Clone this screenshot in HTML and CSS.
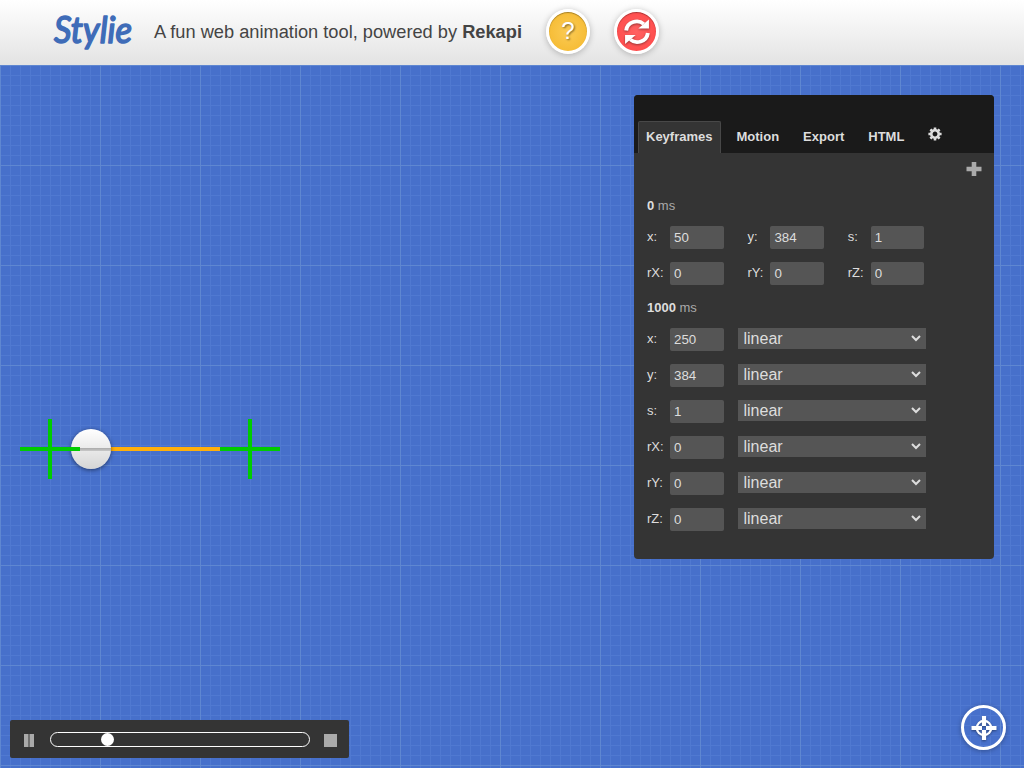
FILE: index.html
```html
<!DOCTYPE html>
<html lang="en">
<head>
<meta charset="utf-8">
<title>Stylie</title>
<link rel="stylesheet" href="styles.css">
</head>
<body>
<header class="header">
  <svg class="logo" width="84" height="56" viewBox="0 -6 84 56"><text class="logo-text" x="2" y="33" textLength="78" lengthAdjust="spacingAndGlyphs">Stylie</text></svg>
  <h1 class="tagline">A fun web animation tool, powered by <b>Rekapi</b></h1>
  <button class="round help">?</button>
  <button class="round reload" aria-label="Reload">
    <svg width="26" height="26" viewBox="0 0 24 26" preserveAspectRatio="none"><path d="M2 11.500C3 2.500 13 0 18.200 5" fill="none" stroke="#fff" stroke-width="3.600"/><path d="M23 .5V9.500H13.200Z" fill="#fff"/><path d="M22 14C21 23 11 25.500 5.800 20.500" fill="none" stroke="#fff" stroke-width="3.600"/><path d="M1 25V16H10.800Z" fill="#fff"/></svg>
  </button>
</header>
<main class="canvas">
  <div class="path"></div>
  <div class="ball"></div>
  <svg class="cross start" width="60" height="60"><path d="M0 30H60M30 0V60"/></svg>
  <svg class="cross end" width="60" height="60"><path d="M0 30H60M30 0V60"/></svg>
</main>
<section class="panel">
  <nav class="tabs">
    <a class="tab active">Keyframes</a><a class="tab">Motion</a><a class="tab">Export</a><a class="tab">HTML</a>
    <a class="tab gear"><svg width="14" height="14" viewBox="-7 -7 14 14"><g stroke="#ddd" stroke-width="2.600"><path d="M0-6.600V-4M0 6.600V4M-6.600 0H-4M6.600 0H4M-4.600-4.600L-3-3M4.600 4.600L3 3M-4.600 4.600L-3 3M4.600-4.600L3-3"/><circle r="3.700" fill="none"/></g></svg></a>
  </nav>
  <div class="body">
    <div class="add"><svg width="16" height="16" viewBox="0 0 16 16"><path d="M0.500 7H15.500M8 0V14" stroke="#aaa" stroke-width="4.600"/></svg></div>
    <h2 class="time"><b>0</b> ms</h2>
    <div class="grid">
      <label class="field"><span>x:</span><input value="50"></label>
      <label class="field"><span>y:</span><input value="384"></label>
      <label class="field"><span>s:</span><input value="1"></label>
      <label class="field"><span>rX:</span><input value="0"></label>
      <label class="field"><span>rY:</span><input value="0"></label>
      <label class="field"><span>rZ:</span><input value="0"></label>
    </div>
    <h2 class="time second"><b>1000</b> ms</h2>
    <div class="rows">
      <div class="row"><label class="field"><span>x:</span><input value="250"></label><select><option>linear</option></select></div>
      <div class="row"><label class="field"><span>y:</span><input value="384"></label><select><option>linear</option></select></div>
      <div class="row"><label class="field"><span>s:</span><input value="1"></label><select><option>linear</option></select></div>
      <div class="row"><label class="field"><span>rX:</span><input value="0"></label><select><option>linear</option></select></div>
      <div class="row"><label class="field"><span>rY:</span><input value="0"></label><select><option>linear</option></select></div>
      <div class="row"><label class="field"><span>rZ:</span><input value="0"></label><select><option>linear</option></select></div>
    </div>
  </div>
</section>
<section class="player">
  <svg class="pause" width="10" height="13"><path d="M0 0H4.500V13H0ZM5.500 0H10V13H5.500Z" fill="#aaa"/></svg>
  <div class="track"><div class="thumb"></div></div>
  <div class="stop"></div>
</section>
<button class="round target" aria-label="Toggle crosshairs">
  <svg width="26" height="26" viewBox="-13 -13 26 26"><circle r="7.200" fill="none" stroke="#fff" stroke-width="2.200"/><path d="M-12.500 0H-2M2 0H12.500M0-12V-2M0 2V12" stroke="#fff" stroke-width="4.200"/></svg>
</button>
</body>
</html>
```
FILE: styles.css
```css
* { box-sizing: border-box; }
body {
  margin: 0;
  width: 1024px;
  height: 768px;
  display: flex;
  flex-direction: column;
  position: relative;
  overflow: hidden;
  font-family: "Liberation Sans", Arial, sans-serif;
  font-size: 13px;
  color: #ddd;
}
.header {
  height: 65px;
  flex: none;
  display: flex;
  align-items: flex-start;
  padding: 9px 0 0 52px;
  background: linear-gradient(#fff, #e3e3e3);
}
.logo { flex: none; margin-top: -5px; overflow: visible; }
.logo-text {
  font: italic 400 37px Lato, sans-serif;
  fill: #3f6cb8;
  stroke: #3f6cb8;
  stroke-width: 1.6;
  stroke-linejoin: round;
}
.tagline {
  margin: 12px 0 0 18px;
  width: 392px;
  font-size: 18.24px;
  line-height: 22px;
  font-weight: 400;
  color: #444;
  white-space: nowrap;
}
.round {
  width: 45px;
  height: 45px;
  flex: none;
  display: flex;
  align-items: center;
  justify-content: center;
  padding: 0;
  border: 3px solid #fff;
  border-radius: 50%;
  box-shadow: 0 1px 6px rgba(0, 0, 0, .25), inset 0 1px 1px rgba(0, 0, 0, .35);
  color: #fff;
}
.round svg { filter: drop-shadow(0 1px 1px rgba(0, 0, 0, .4)); }
.help {
  width: 44px;
  background: radial-gradient(#fbcb55, #f4b72b);
  font: 24px "Liberation Sans", Arial, sans-serif;
  text-shadow: 1px 1px 2px rgba(0, 0, 0, .5);
  padding-bottom: 2px;
}
.reload { margin-left: 24px; background: radial-gradient(#ff6262, #ff4646); }
.target {
  position: absolute;
  left: 961px;
  top: 705px;
  background: transparent;
  box-shadow: 0 1px 5px rgba(0, 0, 0, .3);
}
.canvas {
  flex: 1;
  position: relative;
  background-color: #4770cb;
  background-image:
    linear-gradient(90deg, #5f87d1 1px, transparent 1px),
    linear-gradient(#5f87d1 1px, transparent 1px),
    linear-gradient(90deg, #5079d1 1px, transparent 1px),
    linear-gradient(#5079d1 1px, transparent 1px);
  background-size: 100px 100px, 100px 100px, 10px 10px, 10px 10px;
}
.path { position: absolute; left: 50px; top: 382px; width: 200px; height: 4px; background: #ffaf0a; }
.ball {
  position: absolute;
  left: 71px;
  top: 364px;
  width: 40px;
  height: 40px;
  border-radius: 50%;
  background: linear-gradient(transparent 19px, #aaa 19px, #c8c8c8 22px, transparent 22px), linear-gradient(#fff, #d5d5d5);
  box-shadow: 0 1px 4px rgba(0, 0, 0, .5);
}
.cross { position: absolute; top: 354px; stroke: #0c0; stroke-width: 4; fill: none; }
.start { left: 20px; }
.end { left: 220px; }
.panel {
  position: absolute;
  left: 634px;
  top: 95px;
  width: 360px;
  height: 464px;
  border-radius: 4px;
  overflow: hidden;
  background: #343434;
}
.tabs {
  height: 58px;
  padding: 26px 4px 0;
  display: flex;
  gap: 8px;
  background: #1a1a1a;
}
.tab {
  height: 32px;
  padding: 0 7px;
  border: 1px solid transparent;
  border-bottom: 0;
  border-radius: 2px 2px 0 0;
  font-weight: 700;
  line-height: 29px;
}
.active { background: #343434; border-color: #484848; }
.gear { padding-top: 5px; line-height: 0; }
.body { padding: 0 13px; }
.add { height: 42px; padding: 9px 12px 0 0; margin-right: -13px; display: flex; justify-content: flex-end; }
.time { margin: 0; height: 31px; font-size: 13px; line-height: 22px; font-weight: 400; color: #aaa; }
.time b { color: #ddd; }
.grid { display: grid; grid-template-columns: repeat(3, 100.400px); row-gap: 13px; }
.field { display: flex; height: 23px; }
.field span { width: 23px; line-height: 22px; }
.field input {
  width: 54px;
  height: 23px;
  padding: 0 4px;
  border: 0;
  border-radius: 2px;
  background: #555;
  color: #ddd;
  font: 13.333px "Liberation Sans", Arial, sans-serif;
}
.grid .field input { width: 53.500px; }
.second { margin-top: 12px; }
.rows { display: flex; flex-direction: column; gap: 13px; }
.row { display: flex; gap: 14px; }
.row select {
  width: 188px;
  height: 21px;
  padding: 0 2px 0 1.500px;
  border: 0;
  border-right: 2px solid #555;
  border-radius: 0;
  background: #555;
  color: #ddd;
  font: 16px "Liberation Sans", Arial, sans-serif;
}
.player {
  position: absolute;
  left: 10px;
  top: 720px;
  width: 339px;
  height: 38px;
  padding: 0 12px 0 14px;
  display: flex;
  align-items: center;
  border-radius: 2px;
  background: #343434;
}
.pause { margin: 3px 16px 0 0; }
.track {
  width: 260px;
  height: 15px;
  border: 1px solid #fff;
  border-radius: 8px;
  margin-top: 1px;
}
.thumb { width: 13px; height: 13px; margin-left: 50px; border-radius: 50%; background: #fff; }
.stop { width: 13px; height: 13px; margin: 3px 0 0 14px; background: #aaa; }
```
